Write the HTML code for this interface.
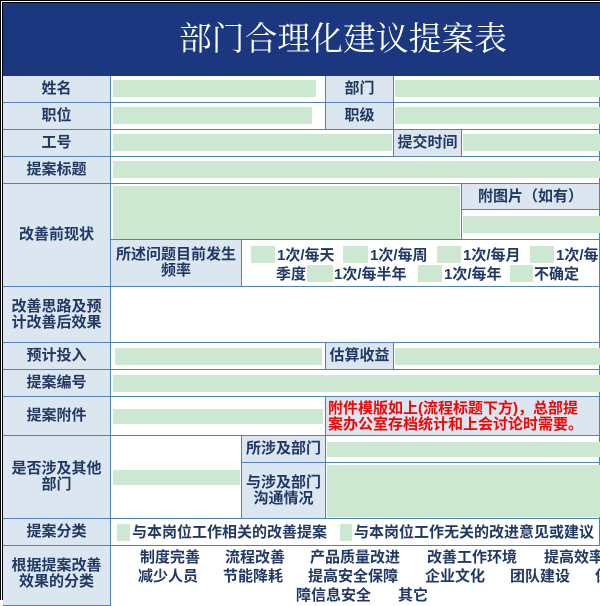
<!DOCTYPE html>
<html><head><meta charset="utf-8"><style>
*{margin:0;padding:0;box-sizing:border-box}
body{width:600px;height:600px;overflow:hidden;background:#fff;position:relative;font-family:"Liberation Sans","Noto Sans CJK SC",sans-serif;color:#1f3864}
.a{position:absolute}
.c{position:absolute;border-right:1px solid #4f81bd;border-bottom:1px solid #4f81bd;display:flex;align-items:center;justify-content:center;text-align:center;font-weight:bold;font-size:15px;line-height:16px}
.l{background:#dce6f1}
.g{position:absolute;background:#cce8d0}
.t{position:absolute;font-size:15px;font-weight:bold;white-space:nowrap;line-height:17px}
</style></head><body>
<div class="a" style="left:0;top:0;width:600px;height:600px;border-left:3px double #000;border-top:3px double #000"></div>
<div class="a" style="left:3px;top:3px;width:597px;height:73px;background:#1a3780"></div>
<div class="a" style="left:179px;top:20px;color:#fff;font-family:'Liberation Serif','Noto Serif CJK SC',serif;font-size:32.8px;line-height:40px;white-space:nowrap">部门合理化建议提案表</div>

<div class="c l" style="left:3px;top:76px;width:108px;height:27px">姓名</div>
<div class="c" style="left:111px;top:76px;width:215px;height:27px"></div>
<div class="g" style="left:113px;top:80px;width:203px;height:17px"></div>
<div class="c l" style="left:326px;top:76px;width:68px;height:27px">部门</div>
<div class="c" style="left:394px;top:76px;width:206px;height:27px"></div>
<div class="g" style="left:395px;top:80px;width:205px;height:17px"></div>

<div class="c l" style="left:3px;top:103px;width:108px;height:27px">职位</div>
<div class="c" style="left:111px;top:103px;width:215px;height:27px"></div>
<div class="g" style="left:113px;top:107px;width:199px;height:17px"></div>
<div class="c l" style="left:326px;top:103px;width:68px;height:27px">职级</div>
<div class="c" style="left:394px;top:103px;width:206px;height:27px"></div>
<div class="g" style="left:395px;top:107px;width:205px;height:17px"></div>

<div class="c l" style="left:3px;top:130px;width:108px;height:27px">工号</div>
<div class="c" style="left:111px;top:130px;width:283px;height:27px"></div>
<div class="g" style="left:113px;top:134px;width:279px;height:17px"></div>
<div class="c l" style="left:394px;top:130px;width:68px;height:27px">提交时间</div>
<div class="c" style="left:462px;top:130px;width:138px;height:27px"></div>
<div class="g" style="left:463px;top:134px;width:137px;height:17px"></div>

<div class="c l" style="left:3px;top:157px;width:108px;height:27px">提案标题</div>
<div class="c" style="left:111px;top:157px;width:489px;height:27px"></div>
<div class="g" style="left:113px;top:161px;width:487px;height:17px"></div>

<div class="c l" style="left:3px;top:184px;width:108px;height:103px">改善前现状</div>
<div class="c" style="left:111px;top:184px;width:351px;height:56px"></div>
<div class="g" style="left:113px;top:186px;width:347px;height:53px"></div>
<div class="c l" style="left:462px;top:184px;width:138px;height:26px">附图片（如有）</div>
<div class="c" style="left:462px;top:210px;width:138px;height:30px"></div>
<div class="g" style="left:463px;top:216px;width:137px;height:17px"></div>
<div class="c l" style="left:111px;top:240px;width:131px;height:47px">所述问题目前发生<br>频率</div>
<div class="c" style="left:242px;top:240px;width:358px;height:47px"></div>
<div class="g" style="left:251px;top:246px;width:24px;height:17px"></div><div class="t" style="left:277px;top:247px">1次/每天</div>
<div class="g" style="left:343px;top:246px;width:25px;height:17px"></div><div class="t" style="left:370px;top:247px">1次/每周</div>
<div class="g" style="left:437px;top:246px;width:24px;height:17px"></div><div class="t" style="left:463px;top:247px">1次/每月</div>
<div class="g" style="left:530px;top:246px;width:24px;height:17px"></div><div class="t" style="left:556px;top:247px">1次/每</div>
<div class="t" style="left:276px;top:266px">季度</div>
<div class="g" style="left:307px;top:265px;width:26px;height:17px"></div><div class="t" style="left:334px;top:266px">1次/每半年</div>
<div class="g" style="left:418px;top:265px;width:24px;height:17px"></div><div class="t" style="left:444px;top:266px">1次/每年</div>
<div class="g" style="left:510px;top:265px;width:23px;height:17px"></div><div class="t" style="left:534px;top:266px">不确定</div>

<div class="c l" style="left:3px;top:287px;width:108px;height:56px">改善思路及预<br>计改善后效果</div>
<div class="c" style="left:111px;top:287px;width:489px;height:56px"></div>

<div class="c l" style="left:3px;top:343px;width:108px;height:27px">预计投入</div>
<div class="c" style="left:111px;top:343px;width:215px;height:27px"></div>
<div class="g" style="left:115px;top:348px;width:207px;height:17px"></div>
<div class="c l" style="left:326px;top:343px;width:68px;height:27px">估算收益</div>
<div class="c" style="left:394px;top:343px;width:206px;height:27px"></div>
<div class="g" style="left:395px;top:348px;width:205px;height:17px"></div>

<div class="c l" style="left:3px;top:370px;width:108px;height:27px">提案编号</div>
<div class="c" style="left:111px;top:370px;width:489px;height:27px"></div>
<div class="g" style="left:113px;top:375px;width:487px;height:17px"></div>

<div class="c l" style="left:3px;top:397px;width:108px;height:39px">提案附件</div>
<div class="c" style="left:111px;top:397px;width:215px;height:39px"></div>
<div class="g" style="left:113px;top:409px;width:210px;height:15px"></div>
<div class="c l" style="left:326px;top:397px;width:274px;height:39px"></div>
<div class="t" style="left:328px;top:401px;color:#f00;line-height:16px">附件模版如上(流程标题下方)，总部提<br>案办公室存档统计和上会讨论时需要。</div>

<div class="c l" style="left:3px;top:436px;width:108px;height:83px">是否涉及其他<br>部门</div>
<div class="c" style="left:111px;top:436px;width:131px;height:83px"></div>
<div class="g" style="left:113px;top:470px;width:127px;height:15px"></div>
<div class="c l" style="left:242px;top:436px;width:84px;height:27px">所涉及部门</div>
<div class="c" style="left:326px;top:436px;width:274px;height:27px"></div>
<div class="g" style="left:327px;top:442px;width:273px;height:15px"></div>
<div class="c l" style="left:242px;top:463px;width:84px;height:56px">与涉及部门<br>沟通情况</div>
<div class="c" style="left:326px;top:463px;width:274px;height:56px"></div>
<div class="g" style="left:327px;top:465px;width:273px;height:52px"></div>

<div class="c l" style="left:3px;top:519px;width:108px;height:27px">提案分类</div>
<div class="c" style="left:111px;top:519px;width:489px;height:27px"></div>
<div class="g" style="left:117px;top:524px;width:13px;height:17px"></div><div class="t" style="left:132px;top:524px">与本岗位工作相关的改善提案</div>
<div class="g" style="left:340px;top:524px;width:12px;height:17px"></div><div class="t" style="left:354px;top:524px">与本岗位工作无关的改进意见或建议</div>

<div class="c l" style="left:3px;top:546px;width:108px;height:60px;align-items:flex-start;padding-top:12px">根据提案改善<br>效果的分类</div>
<div class="t" style="left:140px;top:549px">制度完善</div>
<div class="t" style="left:225px;top:549px">流程改善</div>
<div class="t" style="left:310px;top:549px">产品质量改进</div>
<div class="t" style="left:427px;top:549px">改善工作环境</div>
<div class="t" style="left:544px;top:549px">提高效率</div>
<div class="t" style="left:138px;top:568px">减少人员</div>
<div class="t" style="left:223px;top:568px">节能降耗</div>
<div class="t" style="left:308px;top:568px">提高安全保障</div>
<div class="t" style="left:425px;top:568px">企业文化</div>
<div class="t" style="left:510px;top:568px">团队建设</div>
<div class="t" style="left:595px;top:568px">保</div>
<div class="t" style="left:296px;top:587px">障信息安全</div>
<div class="t" style="left:398px;top:587px">其它</div>
</body></html>
